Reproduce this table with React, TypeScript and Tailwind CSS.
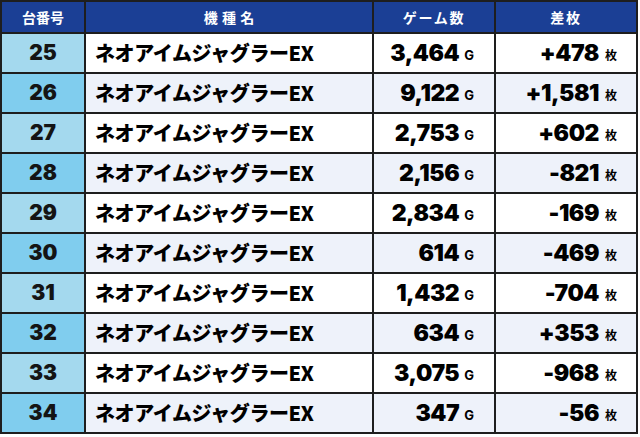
import type React from "react";

// 台番号ごとのデータ
const rows = [
  { no: 25, games: "3,464", diff: "+478" },
  { no: 26, games: "9,122", diff: "+1,581" },
  { no: 27, games: "2,753", diff: "+602" },
  { no: 28, games: "2,156", diff: "-821" },
  { no: 29, games: "2,834", diff: "-169" },
  { no: 30, games: "614", diff: "-469" },
  { no: 31, games: "1,432", diff: "-704" },
  { no: 32, games: "634", diff: "+353" },
  { no: 33, games: "3,075", diff: "-968" },
  { no: 34, games: "347", diff: "-56" },
];

const headCell =
  "h-[30px] bg-[#1b3f95] text-white text-[14px] font-bold flex items-center justify-center font-['Noto_Sans_CJK_JP','Noto_Sans',sans-serif]";

const App: React.FC = () => {
  return (
    <div className="w-[640px] h-[437px] bg-white">
      <div className="w-[638px] grid grid-cols-[82px_286px_120px_140px] gap-[2px] p-[2px] bg-[#1e1e1e]">
        <div className={headCell}>台番号</div>
        <div className={`${headCell} tracking-[0.3em] pl-[0.3em]`}>機種名</div>
        <div className={`${headCell} tracking-[0.12em]`}>ゲーム数</div>
        <div className={`${headCell} tracking-[0.12em]`}>差枚</div>
        {rows.map((r, i) => {
          const even = i % 2 === 1;
          const bg = even ? "bg-[#eef2fa]" : "bg-white";
          return (
            <div key={r.no} className="contents">
              <div
                className={`h-[38px] flex items-center justify-center text-[21px] font-black text-[#141414] font-['Inter',sans-serif] ${even ? "bg-[#80cdee]" : "bg-[#a4d9ee]"}`}
              >
                {r.no}
              </div>
              <div
                className={`h-[38px] flex items-center pl-[9px] text-[20px] font-black text-black tracking-[-0.02em] font-['Noto_Sans_CJK_JP','Noto_Sans',sans-serif] ${bg}`}
              >
                ネオアイムジャグラーEX
              </div>
              <div className={`h-[38px] flex items-center justify-end pr-[20px] text-black font-['Inter',sans-serif] ${bg}`}>
                <span className="text-[23px] font-black tracking-[-0.02em]">{r.games}</span>
                <span className="text-[13px] font-bold ml-[5px] mt-[5px]">G</span>
              </div>
              <div className={`h-[38px] flex items-center justify-end pr-[19px] text-black font-['Inter',sans-serif] ${bg}`}>
                <span className="text-[23px] font-black tracking-[-0.02em]">{r.diff}</span>
                <span className="text-[12px] font-bold ml-[6px] mt-[4px] font-['Noto_Sans_CJK_JP',sans-serif]">枚</span>
              </div>
            </div>
          );
        })}
      </div>
    </div>
  );
};

export default App;
